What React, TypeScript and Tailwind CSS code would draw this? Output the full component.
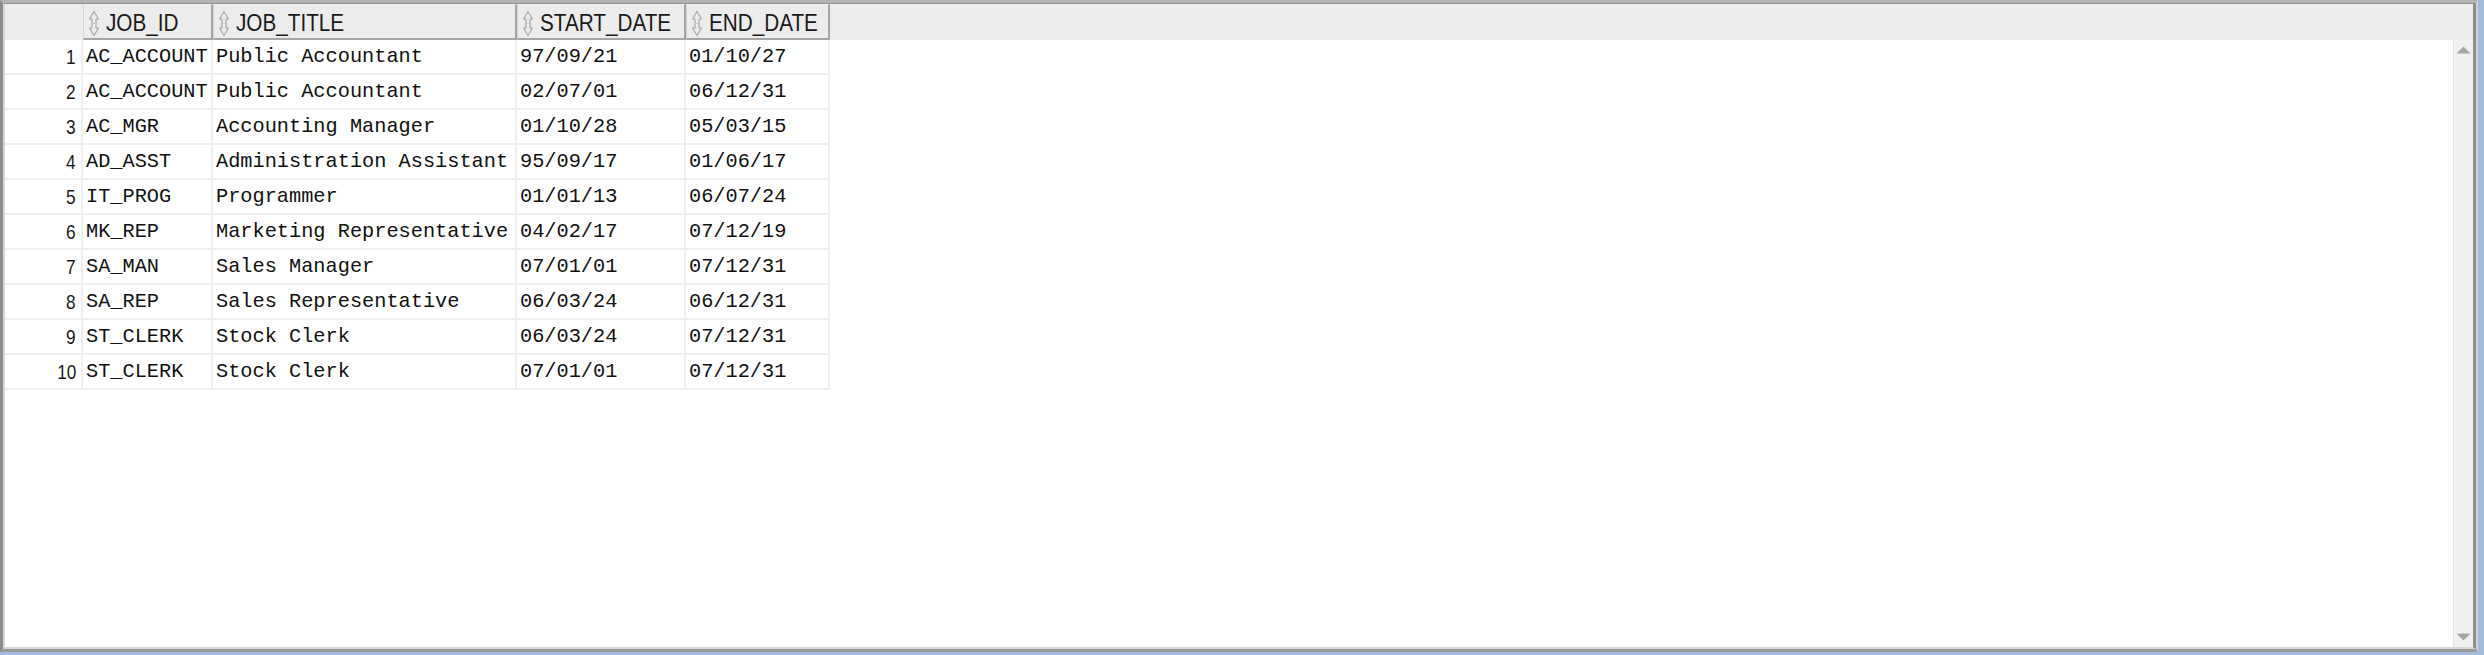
import React from "react";

const rows = [
  ["AC_ACCOUNT", "Public Accountant", "97/09/21", "01/10/27"],
  ["AC_ACCOUNT", "Public Accountant", "02/07/01", "06/12/31"],
  ["AC_MGR", "Accounting Manager", "01/10/28", "05/03/15"],
  ["AD_ASST", "Administration Assistant", "95/09/17", "01/06/17"],
  ["IT_PROG", "Programmer", "01/01/13", "06/07/24"],
  ["MK_REP", "Marketing Representative", "04/02/17", "07/12/19"],
  ["SA_MAN", "Sales Manager", "07/01/01", "07/12/31"],
  ["SA_REP", "Sales Representative", "06/03/24", "06/12/31"],
  ["ST_CLERK", "Stock Clerk", "06/03/24", "07/12/31"],
  ["ST_CLERK", "Stock Clerk", "07/01/01", "07/12/31"],
];

const widths = ["w-[130px]", "w-[304px]", "w-[169px]", "w-[144px]"];
const headers = ["JOB_ID", "JOB_TITLE", "START_DATE", "END_DATE"];

function SortIcon() {
  return (
    <svg width="12" height="27" viewBox="0 0 12 27" className="shrink-0">
      <path
        d="M6 1.5 L10.5 9 L8 9 L8 18 L10.5 18 L6 25.5 L1.5 18 L4 18 L4 9 L1.5 9 Z"
        fill="#ececec"
        stroke="#a8a8a8"
        strokeWidth="1.2"
        strokeLinejoin="round"
      />
      <path d="M4 13.5 L8 13.5" stroke="#c4c4c4" strokeWidth="1" />
    </svg>
  );
}

export default function App() {
  return (
    <div className="w-[2484px] h-[655px] bg-[#a3bcdb] overflow-hidden">
      <div className="w-[2478px] h-[652px] border-l-[3px] border-t-[3px] border-r-[2px] border-b-[3px] border-l-[#8d8d8d] border-t-[#b4b4b4] border-r-[#d2d2d2] border-b-[#9a9a9a]">
        <div className="w-full h-full flex flex-col border-l-[2px] border-t-[1px] border-r-[3px] border-b-[2px] border-l-[#d6d6d6] border-t-[#8d8d8d] border-r-[#8d8d8d] border-b-[#d6d6d6] bg-white">
          {/* header */}
          <div className="h-[36px] flex bg-[#ececec] shrink-0">
            <div className="w-[78px] shrink-0" />
            {headers.map((h, i) => (
              <div
                key={h}
                className={`${widths[i]} shrink-0 flex items-center gap-[6px] pl-[4px] pt-[3px] border-l border-t border-l-[#d4d4d4] border-t-[#f4f4f4] border-r-2 border-b-2 border-r-[#a4a4a4] border-b-[#a4a4a4] text-[23px] text-[#1a1a1a] font-['Liberation_Sans',sans-serif] whitespace-nowrap overflow-hidden`}
              >
                <SortIcon />
                <span className="inline-block scale-x-[0.9] origin-left">{h}</span>
              </div>
            ))}
            <div className="flex-1" />
          </div>
          {/* body */}
          <div className="flex-1 flex min-h-0">
            <div className="flex-1 flex flex-col">
              {rows.map((r, ri) => (
                <div key={ri} className="h-[35px] flex">
                  <div className="w-[78px] shrink-0 flex items-center justify-end pr-[5px] pt-[1px] border-r-2 border-b-2 border-[#efefef] text-[21px] text-[#1a1a1a] font-['Liberation_Sans',sans-serif]">
                    <span className="inline-block scale-x-[0.82] origin-right">{ri + 1}</span>
                  </div>
                  {r.map((c, ci) => (
                    <div
                      key={ci}
                      className={`${widths[ci]} shrink-0 flex items-center pl-[3px] pt-[2px] border-r-2 border-b-2 border-[#efefef] text-[20.3px] text-[#111] font-['Liberation_Mono',monospace] whitespace-pre overflow-hidden`}
                    >
                      {c}
                    </div>
                  ))}
                </div>
              ))}
            </div>
            {/* scrollbar */}
            <div className="w-[20px] shrink-0 flex flex-col items-center justify-between py-[6px] bg-[#f0f0f0] border-l border-[#e0e0e0]">
              <svg width="15" height="8" viewBox="0 0 15 8">
                <path d="M7.5 0.5 L14.5 7.5 L0.5 7.5 Z" fill="#a6a6a6" />
              </svg>
              <svg width="15" height="8" viewBox="0 0 15 8">
                <path d="M0.5 0.5 L14.5 0.5 L7.5 7.5 Z" fill="#a6a6a6" />
              </svg>
            </div>
          </div>
        </div>
      </div>
    </div>
  );
}
